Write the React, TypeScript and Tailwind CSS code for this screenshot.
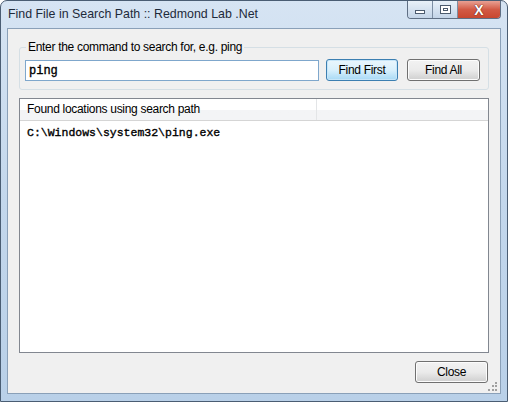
import React from "react";

export default function App() {
  const ui = { fontFamily: '"Liberation Sans", Arial, sans-serif' };
  const mono = { fontFamily: '"Liberation Mono", "Courier New", monospace', WebkitTextStroke: "0.35px #000" } as React.CSSProperties;
  return (
    <div className="w-[508px] h-[402px] bg-white" style={ui}>
      <div className="relative w-[508px] h-[402px] rounded-t-[7px] border border-[#4a5d73] bg-gradient-to-b from-[#d6e4f3] via-[#c3d7ec] to-[#b9d0e8] flex flex-col">
        {/* title bar */}
        <div className="h-[27px] flex items-start shrink-0">
          <div className="pl-[7px] pt-[5px] text-[12.4px] text-[#1e2a3a] leading-[16px]">
            Find File in Search Path :: Redmond Lab .Net
          </div>
          <div className="ml-auto mr-[6px] flex h-[18px] rounded-b-[4px] border border-t-0 border-[#5f6f84] overflow-hidden">
            <div className="w-[25px] bg-gradient-to-b from-[#e9f1f9] to-[#c3d4e7] border-r border-[#7d8ea3] flex items-center justify-center">
              <div className="w-[10px] h-[4px] mt-[5px] border border-[#4c5b6e] bg-white" />
            </div>
            <div className="w-[25px] bg-gradient-to-b from-[#e9f1f9] to-[#c3d4e7] border-r border-[#7d8ea3] flex items-center justify-center">
              <div className="w-[11px] h-[9px] border border-[#4c5b6e] bg-white flex items-center justify-center">
                <div className="w-[5px] h-[3px] border border-[#4c5b6e]" />
              </div>
            </div>
            <div className="w-[42px] bg-gradient-to-b from-[#e8a093] via-[#d25a45] to-[#c8472f] flex items-center justify-center">
              <span className="text-white font-bold text-[14px] leading-none" style={{ textShadow: "0 0 1px #5a1a10, 0 0 1px #5a1a10" }}>
                X
              </span>
            </div>
          </div>
        </div>
        {/* client area */}
        <div className="mx-[6px] mb-[7px] flex-1 border border-[#8aa0b8] bg-[#f0f0f0] relative flex flex-col">
          {/* group box */}
          <div className="relative mt-[18px] ml-[11px] mr-[11px] h-[43px] rounded-[3px] border border-[#d5dfe5]">
            <div className="absolute left-[6px] top-[-9px] px-[2px] bg-[#f0f0f0] text-[12px] tracking-[-0.3px] leading-[16px] text-black">
              Enter the command to search for, e.g. ping
            </div>
            <div className="flex items-start mt-[12px] ml-[5px]">
              <div className="w-[294px] h-[21px] border border-[#7fa7cc] bg-white flex items-center pl-[3px]">
                <span className="text-[12px] text-black" style={mono}>ping</span>
              </div>
              <button className="ml-[7px] mt-[-1px] w-[72px] h-[22px] rounded-[3px] border border-[#3c7fb1] bg-gradient-to-b from-[#eaf6fd] via-[#d9f0fc] to-[#a7d9f5] text-[12px] tracking-[-0.3px] text-black shadow-[inset_0_0_0_1px_#c7e6f9]">
                Find First
              </button>
              <button className="ml-[9px] mt-[-1px] w-[73px] h-[22px] rounded-[3px] border border-[#707070] bg-gradient-to-b from-[#f2f2f2] via-[#ebebeb] to-[#cfcfcf] text-[12px] tracking-[-0.3px] text-black shadow-[inset_0_0_0_1px_#fcfcfc]">
                Find All
              </button>
            </div>
          </div>
          {/* list view */}
          <div className="mt-[8px] ml-[11px] mr-[11px] h-[255px] border border-[#828790] bg-white flex flex-col">
            <div className="h-[22px] flex border-b border-[#d5d5d5] bg-gradient-to-b from-white from-50% to-[#f3f4f6] to-50%">
              <div className="w-[297px] border-r border-[#e3e5e7] pl-[7px] text-[12px] tracking-[-0.3px] leading-[21px] text-black">
                Found locations using search path
              </div>
              <div className="flex-1" />
            </div>
            <div className="pl-[7px] pt-[5px] text-[11.5px] leading-[14px] text-black" style={mono}>
              C:\Windows\system32\ping.exe
            </div>
          </div>
          {/* bottom */}
          <div className="flex justify-end mt-[8px] mr-[12px]">
            <button className="w-[73px] h-[22px] rounded-[3px] border border-[#707070] bg-gradient-to-b from-[#f2f2f2] via-[#ebebeb] to-[#cfcfcf] text-[12px] tracking-[-0.3px] text-black shadow-[inset_0_0_0_1px_#fcfcfc]">
              Close
            </button>
          </div>
          <div className="absolute right-[2px] bottom-[2px] w-[10px] h-[10px] grid grid-cols-3 gap-[1px] items-end">
            <span />
            <span />
            <span className="w-[2px] h-[2px] bg-[#a0a0a0]" />
            <span />
            <span className="w-[2px] h-[2px] bg-[#a0a0a0]" />
            <span className="w-[2px] h-[2px] bg-[#a0a0a0]" />
            <span className="w-[2px] h-[2px] bg-[#a0a0a0]" />
            <span className="w-[2px] h-[2px] bg-[#a0a0a0]" />
            <span className="w-[2px] h-[2px] bg-[#a0a0a0]" />
          </div>
        </div>
      </div>
    </div>
  );
}
